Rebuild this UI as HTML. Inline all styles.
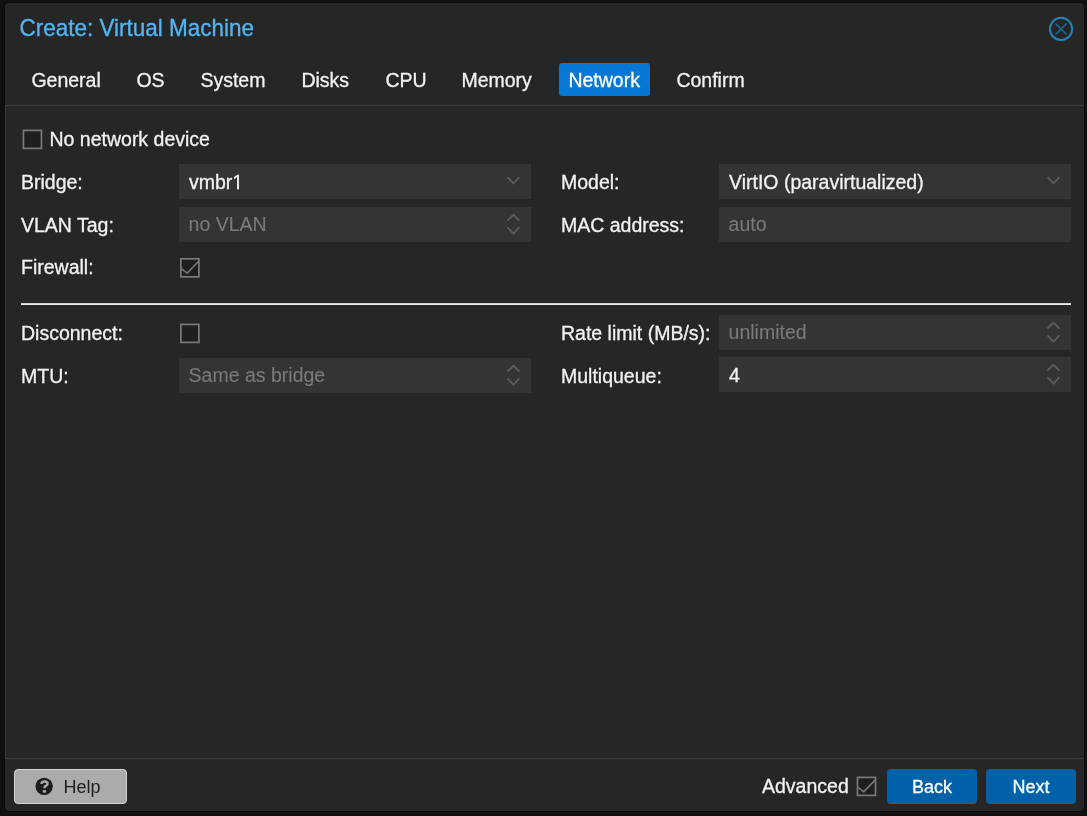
<!DOCTYPE html>
<html><head><meta charset="utf-8">
<style>
html,body{margin:0;padding:0;width:1087px;height:816px;overflow:hidden;background:#101010;}
#wrap{position:absolute;left:0;top:0;width:1087px;height:816px;will-change:transform;}
body{font-family:"Liberation Sans",sans-serif;font-size:19.5px;color:#f2f2f2;position:relative;}
.a{-webkit-text-stroke:0.3px currentColor;}
.a{position:absolute;white-space:nowrap;line-height:20px;}
#win{position:absolute;left:4.5px;top:3px;width:1079.5px;height:808px;background:#262626;border-radius:4px;box-shadow:0 0 0 1px #0b0b0b;}
#title{position:absolute;left:19.4px;top:17px;font-size:22.5px;line-height:24px;color:#50b6f4;transform:scaleY(1.1);transform-origin:0 19.5px;}
.tab{position:absolute;top:69.5px;line-height:20px;}
#nettab{position:absolute;left:559px;top:63px;width:91px;height:33px;background:#0677d2;border-radius:3px;}
#body{position:absolute;left:5px;top:105px;width:1078px;height:654px;border:1px solid #3e3e3e;border-right:none;box-sizing:border-box;}
.fld{position:absolute;height:35px;background:#343434;}
.lbl{position:absolute;line-height:20px;}
.cb{position:absolute;width:16px;height:16px;border:2px solid #5c5c5c;background:#202020;}
.ph{color:#7a7a7a;-webkit-text-stroke:0.1px currentColor;}
.btn{position:absolute;top:769px;height:35px;border-radius:4px;}
</style></head><body><div id="wrap">
<div id="win"></div>
<div id="title" class="a">Create: Virtual Machine</div>
<div id="nettab"></div>
<div class="tab a" style="left:31.4px">General</div>
<div class="tab a" style="left:136.4px">OS</div>
<div class="tab a" style="left:200.4px">System</div>
<div class="tab a" style="left:301.4px">Disks</div>
<div class="tab a" style="left:385.4px">CPU</div>
<div class="tab a" style="left:461.4px">Memory</div>
<div class="tab a" style="left:568.4px;color:#fff">Network</div>
<div class="tab a" style="left:676.4px">Confirm</div>
<div id="body"></div>

<div class="lbl a" style="left:49.5px;top:129px">No network device</div>

<div class="lbl a" style="left:21px;top:172px">Bridge:</div>
<div class="fld" style="left:179px;top:164px;width:352px"></div>
<div class="a" style="left:189px;top:172px">vmbr1</div>
<div style="position:absolute;left:233px;top:187px;width:4px;height:3px;background:#343434"></div><div style="position:absolute;left:239px;top:187px;width:4px;height:3px;background:#343434"></div>

<div class="lbl a" style="left:21px;top:215px">VLAN Tag:</div>
<div class="fld" style="left:179px;top:207px;width:352px"></div>
<div class="a ph" style="left:188.6px;top:214px">no VLAN</div>

<div class="lbl a" style="left:21px;top:257px">Firewall:</div>

<div class="lbl a" style="left:561px;top:172px">Model:</div>
<div class="fld" style="left:719px;top:164px;width:352px"></div>
<div class="a" style="left:729px;top:172px">VirtIO (paravirtualized)</div>

<div class="lbl a" style="left:561px;top:215px">MAC address:</div>
<div class="fld" style="left:719px;top:207px;width:352px"></div>
<div class="a ph" style="left:728.6px;top:214px">auto</div>

<div class="a" style="left:21px;top:303px;width:1050px;height:2px;background:linear-gradient(#d2d2d2 50%,#ececec 50%)"></div>

<div class="lbl a" style="left:21px;top:323px">Disconnect:</div>

<div class="lbl a" style="left:21px;top:366px">MTU:</div>
<div class="fld" style="left:179px;top:358px;width:352px"></div>
<div class="a ph" style="left:188.6px;top:365px">Same as bridge</div>

<div class="lbl a" style="left:561px;top:323px">Rate limit (MB/s):</div>
<div class="fld" style="left:719px;top:315px;width:352px"></div>
<div class="a ph" style="left:728.6px;top:322px">unlimited</div>

<div class="lbl a" style="left:561px;top:366px">Multiqueue:</div>
<div class="fld" style="left:719px;top:357px;width:352px"></div>
<div class="a" style="left:729px;top:365px">4</div>

<div class="btn" style="left:14px;width:113px;background:#ababab;border:1px solid #d4d4d4;box-sizing:border-box;"></div>
<div class="a" style="left:63.5px;top:776.5px;font-size:18px;color:#1e1e1e;-webkit-text-stroke:0">Help</div>

<div class="a" style="left:762px;top:776px">Advanced</div>
<div class="btn" style="left:887px;width:90px;background:#0061a8;"></div>
<div class="a" style="left:887px;width:90px;text-align:center;top:776.5px;font-size:18px;color:#fff">Back</div>
<div class="btn" style="left:986px;width:90px;background:#0061a8;"></div>
<div class="a" style="left:986px;width:90px;text-align:center;top:776.5px;font-size:18px;color:#fff">Next</div>
<svg style="position:absolute;left:0;top:0" width="1087" height="816" viewBox="0 0 1087 816">
<circle cx="1061.05" cy="28.95" r="11.1" fill="none" stroke="#2283b6" stroke-width="2"/>
<path d="M1056.0 24.0 L1066.1 34.0 M1066.1 24.0 L1056.0 34.0" stroke="#1a6a99" stroke-width="1.6" stroke-linecap="round"/>




<rect x="23.45" y="130.40" width="18" height="18" fill="#1f1f1f" stroke="#7a7a7a" stroke-width="1.7"/>
<rect x="180.90" y="258.80" width="18" height="18" fill="#1f1f1f" stroke="#7a7a7a" stroke-width="1.7"/><path d="M182.10 269.15 L187.05 273.25 L198.45 261.50" fill="none" stroke="#7a7a7a" stroke-width="1.6" stroke-linecap="round" stroke-linejoin="round"/>
<rect x="180.90" y="324.40" width="18" height="18" fill="#1f1f1f" stroke="#7a7a7a" stroke-width="1.7"/>
<rect x="857.50" y="777.40" width="18" height="18" fill="#1f1f1f" stroke="#7a7a7a" stroke-width="1.7"/><path d="M858.70 787.75 L863.65 791.85 L875.05 780.10" fill="none" stroke="#7a7a7a" stroke-width="1.6" stroke-linecap="round" stroke-linejoin="round"/>
<path d="M508.20 177.90 L513.40 183.40 L518.70 177.90" fill="none" stroke="#5a5a5a" stroke-width="2" stroke-linecap="round" stroke-linejoin="round"/>
<path d="M1048.20 177.90 L1053.40 183.40 L1058.70 177.90" fill="none" stroke="#5a5a5a" stroke-width="2" stroke-linecap="round" stroke-linejoin="round"/>
<path d="M508.00 220.00 L513.50 214.70 L518.80 220.00 M508.00 227.80 L513.50 233.70 L518.80 227.80" fill="none" stroke="#5a5a5a" stroke-width="1.9" stroke-linecap="round" stroke-linejoin="round"/>
<path d="M508.00 371.00 L513.50 365.70 L518.80 371.00 M508.00 378.80 L513.50 384.70 L518.80 378.80" fill="none" stroke="#5a5a5a" stroke-width="1.9" stroke-linecap="round" stroke-linejoin="round"/>
<path d="M1048.00 328.00 L1053.50 322.70 L1058.80 328.00 M1048.00 335.80 L1053.50 341.70 L1058.80 335.80" fill="none" stroke="#5a5a5a" stroke-width="1.9" stroke-linecap="round" stroke-linejoin="round"/>
<path d="M1048.00 370.00 L1053.50 364.70 L1058.80 370.00 M1048.00 377.80 L1053.50 383.70 L1058.80 377.80" fill="none" stroke="#5a5a5a" stroke-width="1.9" stroke-linecap="round" stroke-linejoin="round"/>
<circle cx="44.15" cy="786.35" r="8.65" fill="#1c1c1c"/>
<path d="M41.4 783.8 C41.6 782.2 42.8 781.5 44.5 781.5 C46.3 781.5 47.6 782.4 47.6 783.8 C47.6 785.6 44.9 785.8 44.6 787.2 L44.6 788.2" fill="none" stroke="#ababab" stroke-width="2.5"/>
<rect x="42.8" y="790.1" width="3.3" height="2.5" fill="#ababab"/>
</svg>
</div></body></html>
